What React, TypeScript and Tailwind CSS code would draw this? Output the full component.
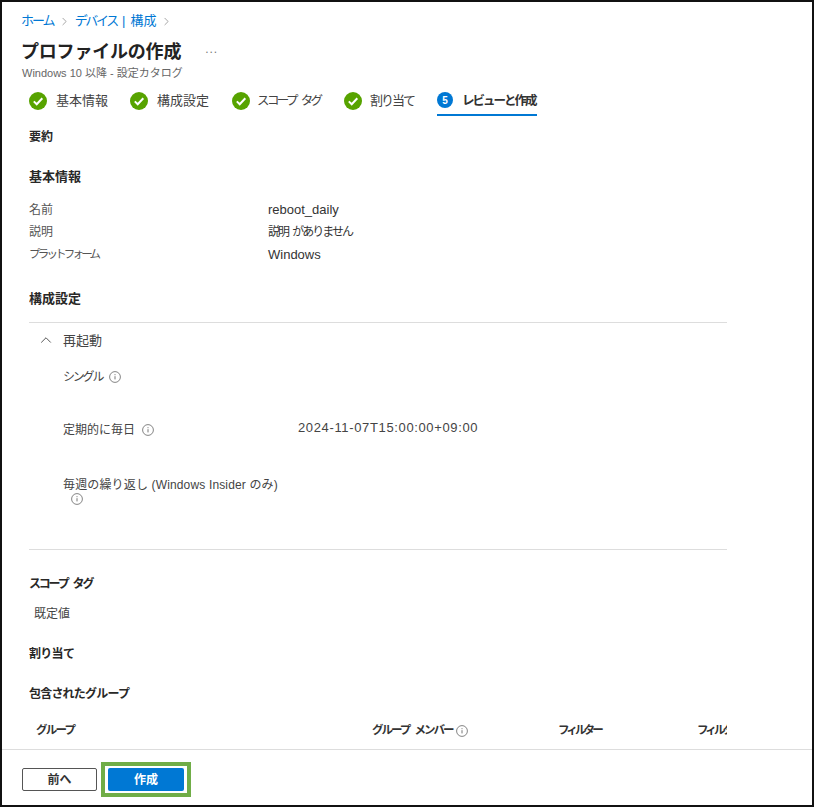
import { ChevronRight, ChevronUp } from "lucide-react";

const FONT = "font-['Liberation_Sans','Noto_Sans_CJK_JP',sans-serif]";

const steps = [
  { label: "基本情報", width: "w-[101px]", text: "text-[13px]" },
  { label: "構成設定", width: "w-[102px]", text: "text-[13px]" },
  { label: "スコープ タグ", width: "w-[112px]", text: "-ml-[2px] text-[12.5px] tracking-[-2.6px] [word-spacing:4px]" },
  { label: "割り当て", width: "w-[93px]", text: "-ml-[1px] text-[13px] tracking-[-2px]" },
];

const CheckIcon = () => (
  <svg width="18" height="18" viewBox="0 0 18 18" className="shrink-0">
    <circle cx="9" cy="9" r="9" fill="#57a300" />
    <path d="M4.8 9.4l2.9 2.8 5.6-6" fill="none" stroke="#fff" strokeWidth="2" />
  </svg>
);

const InfoIcon = ({ className = "" }: { className?: string }) => (
  <svg width="12" height="12" viewBox="0 0 12 12" className={`shrink-0 ${className}`}>
    <circle cx="6" cy="6" r="5.4" fill="none" stroke="#777" strokeWidth="0.9" />
    <path d="M6 5.2v3.2M6 3.2v1" stroke="#777" strokeWidth="1" />
  </svg>
);

const Row = ({
  name,
  value,
  nameClass = "text-[12px]",
  valueClass = "text-[13px]",
}: {
  name: string;
  value: string;
  nameClass?: string;
  valueClass?: string;
}) => (
  <div className="flex h-[22.5px] items-center">
    <div className={`w-[239px] text-[#555] ${nameClass}`}>{name}</div>
    <div className={`text-[#333] ${valueClass}`}>{value}</div>
  </div>
);

const SectionTitle = ({ children, className = "" }: { children: string; className?: string }) => (
  <div className={`font-bold text-[#292827] ${className}`}>{children}</div>
);

export default function App() {
  return (
    <div className={`flex h-[807px] w-[814px] flex-col border-2 border-[#111] bg-white ${FONT}`}>
      <div className="flex-1 overflow-hidden">
        <div className="h-[14px]" />
        {/* breadcrumb */}
        <div className="ml-[19px] flex h-[10px] items-center gap-[4px] whitespace-nowrap text-[13px] text-[#0078d4]">
          <span className="tracking-[-2px]">ホーム</span>
          <ChevronRight size={13} strokeWidth={1.2} className="text-[#777]" />
          <span>
            <span className="tracking-[-2.3px]">デバイス</span>
            <span className="mx-[5px]">|</span>
            <span>構成</span>
          </span>
          <ChevronRight size={13} strokeWidth={1.2} className="text-[#777]" />
        </div>

        {/* title */}
        <div className="ml-[19px] mt-[12px] flex h-[28px] items-center">
          <h1 className="text-[18px] font-bold tracking-[-0.2px] text-[#222]">プロファイルの作成</h1>
          <span className="ml-[24px] mt-[-6px] text-[12px] tracking-[1px] text-[#777]">...</span>
        </div>
        <div className="ml-[20px] h-[14px] text-[11px] leading-[14px] text-[#666]">
          Windows 10 以降 - 設定カタログ
        </div>

        {/* steps */}
        <div className="ml-[27px] mt-[9px] flex h-[28px] items-start">
          {steps.map((s) => (
            <div key={s.label} className={`flex h-[22px] items-center gap-[9px] pt-[2px] whitespace-nowrap ${s.width}`}>
              <CheckIcon />
              <span className={`text-[#444] ${s.text}`}>{s.label}</span>
            </div>
          ))}
          <div className="flex h-[27px] w-[100px] items-start gap-[9px] whitespace-nowrap border-b-2 border-[#0078d4] pt-[3px]">
            <span className="flex h-[16px] w-[16px] shrink-0 items-center justify-center rounded-full bg-[#0078d4] text-[10px] font-bold text-white">
              5
            </span>
            <span className="text-[12.5px] font-bold tracking-[-2px] text-[#333]">レビューと作成</span>
          </div>
        </div>

        <div className="ml-[27px] w-[698px] overflow-hidden">
          <SectionTitle className="mt-[11px] text-[12px]">要約</SectionTitle>
          <SectionTitle className="mt-[21px] text-[13px]">基本情報</SectionTitle>

          <div className="mt-[12px]">
            <Row name="名前" value="reboot_daily" />
            <Row
              name="説明"
              value="説明 がありません"
              valueClass="text-[12px] tracking-[-2px] [word-spacing:3px]"
            />
            <Row name="プラットフォーム" value="Windows" nameClass="text-[11.5px] tracking-[-2.8px]" />
          </div>

          <SectionTitle className="mt-[23px] text-[13px]">構成設定</SectionTitle>

          <div className="mt-[13px] border-y border-[#ddd] pb-[44px]">
            <div className="ml-[8px] mt-[8px] flex items-center gap-[8px] text-[13px] text-[#444]">
              <ChevronUp size={18} strokeWidth={1.2} className="text-[#444]" />
              <span>再起動</span>
            </div>
            <div className="ml-[34px] mt-[18px] flex items-center gap-[7px] text-[12px] text-[#444]">
              <span className="tracking-[-2.2px]">シングル</span>
              <InfoIcon />
            </div>
            <div className="ml-[34px] mt-[35px] flex items-center text-[12px] text-[#444]">
              <div className="flex w-[235px] items-center gap-[7px]">
                <span>定期的に毎日</span>
                <InfoIcon />
              </div>
              <span className="mt-[-4px] text-[13px] tracking-[0.64px] text-[#444]">2024-11-07T15:00:00+09:00</span>
            </div>
            <div className="ml-[34px] mt-[39px] text-[12px] leading-[15px] tracking-[0.15px] text-[#444]">
              <div>毎週の繰り返し (Windows Insider のみ)</div>
              <InfoIcon className="ml-[8px]" />
            </div>
          </div>

          <SectionTitle className="mt-[25px] text-[12px] tracking-[-2.2px] [word-spacing:4px]">
            スコープ タグ
          </SectionTitle>
          <div className="ml-[5px] mt-[12px] text-[12px] text-[#444]">既定値</div>
          <SectionTitle className="mt-[22px] text-[12px] tracking-[-0.7px]">割り当て</SectionTitle>
          <SectionTitle className="mt-[22px] text-[12px] tracking-[-0.8px]">包含されたグループ</SectionTitle>

          {/* table header clipped at the right edge */}
          <div className="ml-[7px] mt-[19px] flex w-[800px] items-center text-[11.5px] font-bold text-[#333]">
            <div className="w-[336px] tracking-[-1.8px]">グループ</div>
            <div className="flex w-[186px] items-center gap-[3px]">
              <span className="tracking-[-2px] [word-spacing:4px]">グループ メンバー</span>
              <InfoIcon />
            </div>
            <div className="w-[139px] tracking-[-2.9px]">フィルター</div>
            <div className="tracking-[-2.9px]">フィルター モード</div>
          </div>
        </div>
      </div>

      {/* footer */}
      <div className="flex h-[56px] shrink-0 items-start gap-[4px] border-t border-[#ddd] bg-white pl-[20px] pt-[18px]">
        <button className="h-[23px] w-[75px] rounded-[2px] border border-[#555] bg-white text-[12px] font-bold text-[#333]">
          前へ
        </button>
        <div className="-mt-[6px] border-[4px] border-[#70ad47] bg-white px-[3px] py-[2px]">
          <button className="block h-[23px] w-[76px] rounded-[2px] bg-[#0078d4] text-[12px] font-bold text-white">
            作成
          </button>
        </div>
      </div>
    </div>
  );
}
